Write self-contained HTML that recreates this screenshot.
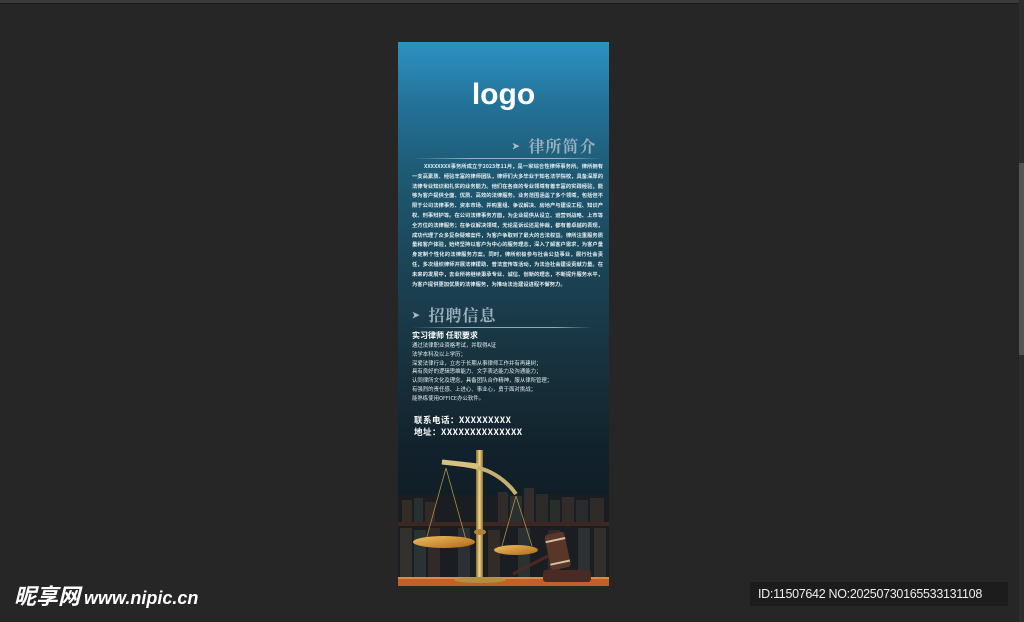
<!DOCTYPE html>
<html><head><meta charset="utf-8"><style>
*{margin:0;padding:0;box-sizing:border-box}
body{width:1024px;height:622px;background:#262626;position:relative;overflow:hidden;font-family:"Liberation Sans","Noto Sans CJK SC",sans-serif}
.top{position:absolute;left:0;top:0;width:1024px;height:4px;background:#3a3a3a;border-bottom:1px solid #1c1c1c}
.sb{position:absolute;left:1019px;top:0;width:5px;height:622px;background:#2d2d2d}
.sb i{position:absolute;left:0;top:163px;width:5px;height:192px;background:#555}
.poster{position:absolute;left:398px;top:42px;width:211px;height:544px;overflow:hidden;
background:linear-gradient(#2d92c2 0px,#24739a 60px,#1e5a74 130px,#1b4355 230px,#17303b 330px,#11202a 420px,#0e1a20 544px)}
.logo{position:absolute;left:0;width:100%;top:36px;text-align:center;color:#fff;font-weight:bold;font-size:30px}
.h{position:absolute;font-family:"Noto Serif CJK SC",serif;font-weight:bold;color:#9ab0bd;font-size:16px;letter-spacing:1px}
.h b{font-family:"Liberation Sans",sans-serif;font-size:9px;color:#aabccc;margin-right:8px;vertical-align:3px}
.line{position:absolute;height:1px;background:linear-gradient(90deg,rgba(200,215,225,0),rgba(200,215,225,.7) 30%,rgba(200,215,225,.7) 80%,rgba(200,215,225,0))}
.p{position:absolute;left:14px;width:191px;color:#e4ecef;font-size:5.3px;line-height:9.8px;text-indent:12px;font-family:"Noto Sans CJK SC",sans-serif;text-align:justify;font-weight:bold}
.r{position:absolute;left:14px;color:#e6ecee;font-size:5.4px;line-height:8.8px;font-family:"Noto Sans CJK SC",sans-serif}
.t{position:absolute;color:#fff;font-weight:bold;font-family:"Noto Sans CJK SC",sans-serif}
.wm{position:absolute;left:14px;top:582px;color:#fff;font-weight:bold;font-style:italic;font-size:22px;font-family:"Noto Sans CJK SC",sans-serif;line-height:26px}
.wm span{font-family:"Liberation Sans",sans-serif;font-size:18px;margin-left:4px}
.id{position:absolute;left:750px;top:582px;width:258px;height:24px;background:#1c1c1c;color:#eee;font-size:12.5px;line-height:24px;padding-left:8px;letter-spacing:-.3px}
</style></head><body>
<div class="top"></div>
<div class="sb"><i></i></div>
<div class="poster">
<div class="logo">logo</div>
<div class="h" style="left:114px;top:92px"><b>&#10148;</b>律所简介</div>
<div class="line" style="left:14px;top:116px;width:190px"></div>
<div class="p" style="top:120px">XXXXXXXX事务所成立于2023年11月，是一家综合性律师事务所。律所拥有一支高素质、经验丰富的律师团队，律师们大多毕业于知名法学院校，具备深厚的法律专业知识和扎实的业务能力。他们在各自的专业领域有着丰富的实践经验，能够为客户提供全面、优质、高效的法律服务。业务范围涵盖了多个领域，包括但不限于公司法律事务、资本市场、并购重组、争议解决、房地产与建设工程、知识产权、刑事辩护等。在公司法律事务方面，为企业提供从设立、运营到战略、上市等全方位的法律服务；在争议解决领域，无论是诉讼还是仲裁，都有着卓越的表现，成功代理了众多复杂疑难案件，为客户争取到了最大的合法权益。律所注重服务质量和客户体验，始终坚持以客户为中心的服务理念，深入了解客户需求，为客户量身定制个性化的法律服务方案。同时，律所积极参与社会公益事业，履行社会责任，多次组织律师开展法律援助、普法宣传等活动，为法治社会建设贡献力量。在未来的发展中，去业所将继续秉承专业、诚信、创新的理念，不断提升服务水平，为客户提供更加优质的法律服务，为推动法治建设进程不懈努力。</div>
<div class="h" style="left:14px;top:261px"><b>&#10148;</b>招聘信息</div>
<div class="line" style="left:14px;top:285px;width:180px"></div>
<div class="t" style="left:14px;top:288px;font-size:8px">实习律师 任职要求</div>
<div class="r" style="top:299px">通过法律职业资格考试，并取得A证<br>法学本科及以上学历；<br>深爱法律行业，立志于长期从事律师工作并有再建树；<br>具有良好的逻辑思维能力、文字表达能力及沟通能力；<br>认同律所文化及理念，具备团队合作精神，服从律所管理；<br>有强烈的责任感、上进心、事业心，勇于面对挑战；<br>能熟练使用OFFICE办公软件。</div>
<div class="t" style="left:16px;top:372px;font-size:8.5px;line-height:12px;letter-spacing:.5px">联系电话：XXXXXXXXX<br>地址：XXXXXXXXXXXXXX</div>
<svg style="position:absolute;left:0;top:400px" width="211" height="144" viewBox="0 0 211 144">
<defs>
<linearGradient id="g" x1="0" x2="1"><stop offset="0" stop-color="#8a6a20"/><stop offset=".5" stop-color="#f0d890"/><stop offset="1" stop-color="#8a6a20"/></linearGradient>
<linearGradient id="pan" y1="0" y2="1"><stop offset="0" stop-color="#f0c060"/><stop offset="1" stop-color="#b06818"/></linearGradient>
</defs>
<rect y="52" width="211" height="86" fill="#1a1e22"/>
<g opacity=".75">
<rect x="4" y="58" width="10" height="22" fill="#3a3428"/><rect x="16" y="56" width="9" height="24" fill="#2c3836"/><rect x="27" y="60" width="10" height="20" fill="#3a2e28"/><rect x="100" y="50" width="10" height="30" fill="#3a3030"/><rect x="112" y="54" width="12" height="26" fill="#2e3634"/><rect x="126" y="46" width="10" height="34" fill="#3e3230"/><rect x="138" y="52" width="12" height="28" fill="#33302c"/><rect x="152" y="58" width="10" height="22" fill="#2c3430"/><rect x="164" y="55" width="12" height="25" fill="#3a302c"/><rect x="178" y="58" width="12" height="22" fill="#2e3032"/><rect x="192" y="56" width="14" height="24" fill="#36302c"/>
<rect y="80" width="211" height="4" fill="#4a2a1e"/>
<rect x="2" y="86" width="12" height="52" fill="#3a3832"/><rect x="16" y="88" width="12" height="50" fill="#2e3a38"/><rect x="30" y="86" width="12" height="52" fill="#3a2e2a"/><rect x="60" y="86" width="12" height="52" fill="#33363a"/><rect x="90" y="88" width="12" height="50" fill="#3a3028"/><rect x="120" y="86" width="12" height="52" fill="#2e3836"/><rect x="150" y="88" width="12" height="50" fill="#3a2e2c"/><rect x="180" y="86" width="12" height="52" fill="#34383a"/><rect x="196" y="86" width="12" height="52" fill="#3a3430"/>
</g>
<rect y="135" width="211" height="9" fill="#c0602a"/>
<rect y="135" width="211" height="2" fill="#e08a4a"/>
<rect x="78" y="8" width="7" height="128" fill="url(#g)"/>
<path d="M44 20 Q80 24 92 30 Q108 38 118 52" stroke="#c8b070" stroke-width="4" fill="none"/>
<path d="M44 20 L80 24" stroke="#d8c080" stroke-width="5"/>
<path d="M48 26 L28 98 M48 26 L68 98 M118 54 L104 104 M118 54 L134 104" stroke="#b09040" stroke-width=".8"/>
<ellipse cx="46" cy="100" rx="31" ry="6" fill="url(#pan)"/>
<ellipse cx="118" cy="108" rx="22" ry="5" fill="url(#pan)"/>
<ellipse cx="82" cy="90" rx="6" ry="3" fill="#b08040"/>
<ellipse cx="82" cy="138" rx="26" ry="3" fill="#b09040"/>
<path d="M115 132 L154 112" stroke="#4a2a20" stroke-width="3"/>
<g transform="rotate(-12 164 110)"><rect x="150" y="90" width="20" height="36" rx="3" fill="#5a3628"/><rect x="150" y="96" width="20" height="2" fill="#d0c0a0"/><rect x="150" y="119" width="20" height="2" fill="#d0c0a0"/></g>
<rect x="145" y="128" width="48" height="12" rx="3" fill="#4a2a22"/>
</svg>
</div>
<div class="wm">昵享网<span>www.nipic.cn</span></div>
<div class="id">ID:11507642 NO:20250730165533131108</div>
</body></html>
